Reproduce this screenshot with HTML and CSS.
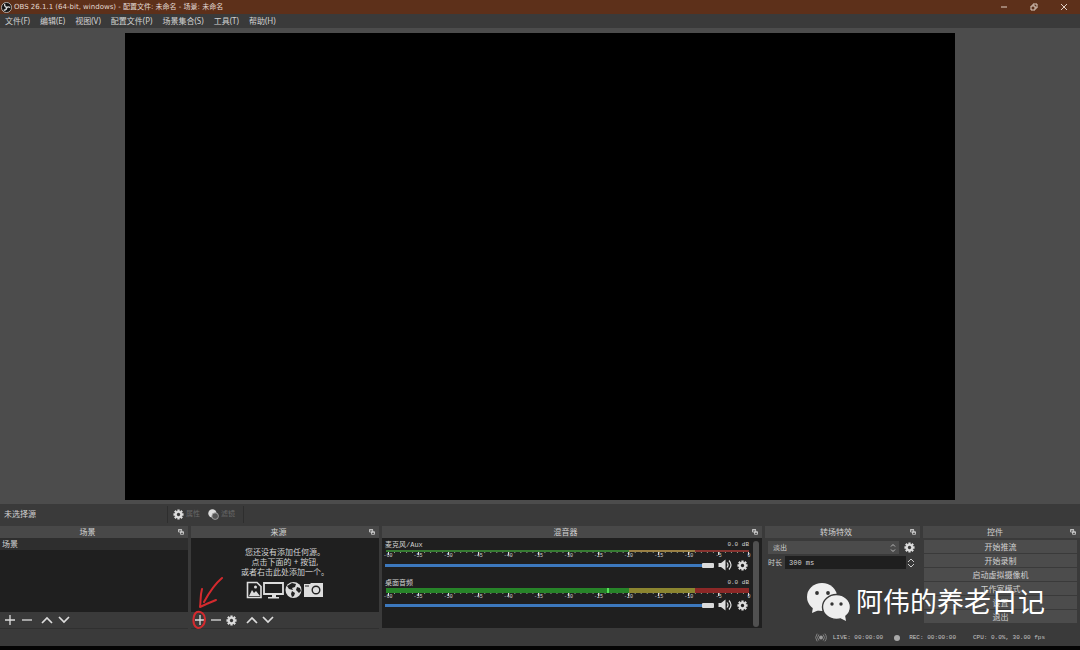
FILE: index.html
```html
<!DOCTYPE html>
<html lang="zh-CN">
<head>
<meta charset="utf-8">
<title>OBS 26.1.1</title>
<link rel="stylesheet" href="styles.css">
</head>
<body>
<svg class="defs" aria-hidden="true">
  <symbol id="gear" viewBox="0 0 24 24"><path fill="none" stroke="currentColor" stroke-width="4.500" d="M12 6a6 6 0 1 0 .01 0z"/><path stroke="currentColor" stroke-width="5" d="M12 1v4M12 19v4M1 12h4M19 12h4M4 4l3 3M17 17l3 3M4 20l3-3M17 7l3-3"/></symbol>
  <symbol id="plus" viewBox="0 0 12 12"><path d="M6 1v10M1 6h10" stroke="currentColor" stroke-width="1.300"/></symbol>
  <symbol id="minus" viewBox="0 0 12 12"><path d="M1 6h10" stroke="currentColor" stroke-width="1.300"/></symbol>
  <symbol id="up" viewBox="0 0 12 12"><path d="M1 9l5-5 5 5" fill="none" stroke="currentColor" stroke-width="1.700"/></symbol>
  <symbol id="down" viewBox="0 0 12 12"><path d="M1 3l5 5 5-5" fill="none" stroke="currentColor" stroke-width="1.700"/></symbol>
  <symbol id="float" viewBox="0 0 6 6"><path d="M.5 3V.8h3.200V3zM2.500 5.300V3h3v2.300z" fill="none" stroke="currentColor" stroke-width=".8"/><path d="M.2 .8h3.800M2.200 3h3.600" stroke="currentColor" stroke-width="1"/></symbol>
  <symbol id="speaker" viewBox="0 0 28 24"><path d="M0 8h5l9-7v22l-9-7H0z" fill="currentColor"/><path d="M17 7q4 5 0 10M21 3q8 9 0 18" fill="none" stroke="currentColor" stroke-width="2.400"/></symbol>
  <symbol id="ticks" viewBox="0 0 360 4" preserveAspectRatio="none"><path d="M0 .5h361" stroke="#8a9a88" stroke-width="1.500" stroke-dasharray="1 5"/><path d="M0 2h361" stroke="#ddd" stroke-width="4" stroke-dasharray="1 28.920"/></symbol>
</svg>

<header class="titlebar">
  <svg class="logo" viewBox="0 0 24 24"><circle cx="12" cy="12" r="11" fill="#151515" stroke="#ddd" stroke-width="1.500"/><g fill="none" stroke="#ddd" stroke-width="2.800"><path d="M8 4c-1 6 3 8 6 7"/><path d="M20 12c-5-3-9 0-8 4"/><path d="M6 18c6 0 7-4 5-7"/></g></svg>
  <span class="title">OBS 26.1.1 (64-bit, windows) - 配置文件: 未命名 - 场景: 未命名</span>
  <div class="winbtns">
    <button aria-label="最小化"><svg viewBox="0 0 8 8"><path d="M1 4h6"/></svg></button>
    <button aria-label="还原"><svg viewBox="0 0 8 8"><path d="M1 3h4v4H1zM3 3V1h4v4H5"/></svg></button>
    <button aria-label="关闭"><svg viewBox="0 0 8 8"><path d="M1 1l6 6M7 1L1 7"/></svg></button>
  </div>
</header>
<nav class="menubar">
  <button>文件(F)</button><button>编辑(E)</button><button>视图(V)</button><button>配置文件(P)</button><button>场景集合(S)</button><button>工具(T)</button><button>帮助(H)</button>
</nav>
<main class="preview"><div class="canvas"></div></main>

<div class="sourcebar">
  <span class="nosource">未选择源</span>
  <div class="sourceactions">
    <button disabled><svg class="i10"><use href="#gear"/></svg>属性</button>
    <button disabled><svg class="i10" viewBox="0 0 20 20"><circle cx="8" cy="8" r="7.500" fill="#ddd"/><circle cx="13" cy="13" r="6" fill="#555" stroke="#aaa" stroke-width="1.500"/></svg>滤镜</button>
  </div>
</div>

<div class="docks">
  <section class="dock">
    <h2>场景<svg class="float"><use href="#float"/></svg></h2>
    <ul class="list"><li>场景</li></ul>
    <div class="tools">
      <button aria-label="添加场景"><svg><use href="#plus"/></svg></button>
      <button aria-label="移除场景"><svg><use href="#minus"/></svg></button>
      <button class="apart" aria-label="上移"><svg><use href="#up"/></svg></button>
      <button aria-label="下移"><svg><use href="#down"/></svg></button>
    </div>
  </section>

  <section class="dock sources">
    <h2>来源<svg class="float"><use href="#float"/></svg></h2>
    <div class="list empty">
      <p>您还没有添加任何源。<br>点击下面的 + 按钮,<br>或者右击此处添加一个。</p>
      <svg class="kinds" viewBox="0 0 78 18">
        <path d="M1.500 1.500h9.500l4 4v11H1.500z" fill="none" stroke="#ddd" stroke-width="1.600"/><path d="M3 15l3-6 2 3 2-2 4 5z" fill="#ddd"/><circle cx="9.500" cy="6" r="1.500" fill="#ddd"/>
        <path d="M18 2h19v11H18z" fill="none" stroke="#ddd" stroke-width="1.800"/><path d="M26 13h4v3h3v1.500H22V16h4z" fill="#ddd"/>
        <circle cx="47.500" cy="9" r="8" fill="#ddd"/><path d="M46 2l4 1-1 3-3 1 1 2-4-1-2-3zM51 6l3 1 1 3-2 2-3-3zM46 10l3 2-1 3-2 1-1-3z" fill="#222"/>
        <path d="M58 3h6l1-1h12v14H58z" fill="#ddd"/><circle cx="70" cy="9" r="3.800" fill="#ddd" stroke="#222" stroke-width="1.400"/><path d="M59 5h4" stroke="#222"/>
      </svg>
    </div>
    <div class="tools">
      <button aria-label="添加来源"><svg><use href="#plus"/></svg></button>
      <button aria-label="移除来源"><svg><use href="#minus"/></svg></button>
      <button aria-label="来源属性"><svg class="i10"><use href="#gear"/></svg></button>
      <button class="near" aria-label="上移"><svg><use href="#up"/></svg></button>
      <button aria-label="下移"><svg><use href="#down"/></svg></button>
    </div>
    <svg class="mark" viewBox="0 0 34 56"><g fill="none" stroke="#d42a2e" stroke-width="2" stroke-linecap="round" stroke-linejoin="round"><path d="M33 3C27 8 21 16 15 27M13 14c-2 7-1 12-2 18 6-3 11-5 16-7M8 37c-4 2-5 12-1 15 4 3 9-2 9-8 0-5-4-8-8-7"/></g></svg>
  </section>

  <section class="dock">
    <h2>混音器<svg class="float"><use href="#float"/></svg></h2>
    <div class="mixer">
      <div class="channels">
        <div class="channel">
          <div class="names"><label for="mic">麦克风/Aux</label><output>0.0 dB</output></div>
          <div class="meter"></div>
          <svg class="ticks"><use href="#ticks"/></svg>
          <div class="scale"><span>-60</span><span>-55</span><span>-50</span><span>-45</span><span>-40</span><span>-35</span><span>-30</span><span>-25</span><span>-20</span><span>-15</span><span>-10</span><span>-5</span><span>0</span></div>
          <div class="volume"><input id="mic" type="range" value="100"><button aria-label="静音"><svg class="speaker"><use href="#speaker"/></svg></button><button aria-label="设置"><svg class="i10"><use href="#gear"/></svg></button></div>
        </div>
        <div class="channel">
          <div class="names"><label for="desk">桌面音频</label><output>0.0 dB</output></div>
          <div class="meter live"><i class="peak"></i></div>
          <svg class="ticks"><use href="#ticks"/></svg>
          <div class="scale"><span>-60</span><span>-55</span><span>-50</span><span>-45</span><span>-40</span><span>-35</span><span>-30</span><span>-25</span><span>-20</span><span>-15</span><span>-10</span><span>-5</span><span>0</span></div>
          <div class="volume"><input id="desk" type="range" value="100"><button aria-label="静音"><svg class="speaker"><use href="#speaker"/></svg></button><button aria-label="设置"><svg class="i10"><use href="#gear"/></svg></button></div>
        </div>
      </div>
      <div class="scrollbar"></div>
    </div>
  </section>

  <section class="dock">
    <h2>转场特效<svg class="float"><use href="#float"/></svg></h2>
    <div class="transition">
      <div class="row">
        <div class="combo"><select aria-label="转场"><option>淡出</option></select><svg viewBox="0 0 6 10"><path d="M1 3.500l2-2 2 2M1 6.500l2 2 2-2"/></svg></div>
        <button aria-label="转场设置"><svg class="i10"><use href="#gear"/></svg></button>
      </div>
      <div class="row">
        <label for="time">时长</label><input id="time" type="text" value="300 ms">
        <div class="spin"><button aria-label="增加"><svg viewBox="0 0 8 6"><path d="M1 5l3-3 3 3"/></svg></button><button aria-label="减少"><svg viewBox="0 0 8 6"><path d="M1 1l3 3 3-3"/></svg></button></div>
      </div>
    </div>
  </section>

  <section class="dock">
    <h2>控件<svg class="float"><use href="#float"/></svg></h2>
    <div class="controls"><button>开始推流</button><button>开始录制</button><button>启动虚拟摄像机</button><button>工作室模式</button><button>设置</button><button>退出</button></div>
  </section>

  <div class="watermark">
    <svg viewBox="0 0 44 38"><ellipse cx="15" cy="14" rx="15" ry="14" fill="#eee"/><path d="M6 24l-1 6 7-3z" fill="#eee"/><ellipse cx="29.500" cy="24" rx="14" ry="12.500" fill="#eee" stroke="#3a3a3a" stroke-width="1.400"/><path d="M33 35l6 3-1-6z" fill="#eee"/><g fill="#333"><circle cx="10" cy="10" r="1.900"/><circle cx="21" cy="10" r="1.900"/><circle cx="25" cy="21" r="1.700"/><circle cx="34" cy="21" r="1.700"/></g></svg>
    <span>阿伟的养老日记</span>
  </div>
</div>

<footer class="status">
  <svg viewBox="0 0 14 10"><circle cx="7" cy="5" r="2.200" fill="#999"/><path d="M4.500 1.500q-3 3.500 0 7M9.500 1.500q3 3.500 0 7M2.500.5q-3.500 4.500 0 9M11.500.5q3.500 4.500 0 9" fill="none" stroke="#999" stroke-width=".9"/></svg>
  <span class="live-time">LIVE: 00:00:00</span><i class="dot"></i><span>REC: 00:00:00</span><span class="cpu">CPU: 0.0%, 30.00 fps</span>
</footer>
<div class="taskbar"></div>
</body>
</html>
```

FILE: styles.css
```css
* { box-sizing: border-box; }
body {
  margin: 0;
  min-height: 100vh;
  display: flex;
  flex-direction: column;
  background: #3a3a3a;
  color: #d2d2d2;
  font: 7px/10px "Noto Sans", "Noto Sans CJK SC", sans-serif;
}
button, input, select { font: inherit; color: inherit; border: 0; padding: 0; margin: 0; background: none; }
button { display: flex; align-items: center; justify-content: center; }
svg { display: block; flex: none; }
.defs { position: absolute; width: 0; height: 0; }
.i10 { width: 11px; height: 11px; color: #ddd; }

.titlebar { display: flex; align-items: center; height: 14px; padding-left: 1px; background: #5d301a; font-family: "DejaVu Sans", "Noto Sans CJK SC", sans-serif; font-size: 7px; }
.logo { width: 11px; height: 11px; }
.title { margin-left: 2px; color: #e2d8d2; white-space: nowrap; }
.winbtns { display: flex; margin-left: auto; gap: 14px; padding-right: 8px; }
.winbtns button { width: 16px; }
.winbtns svg { width: 8px; height: 8px; fill: none; stroke: #e0cfc4; stroke-width: 1; }
.menubar { display: flex; height: 14px; gap: 10px; padding-left: 5px; font-size: 8px; }

.preview { flex: 1; display: flex; justify-content: center; padding: 5px 0 4px; background: #4c4c4c; }
.canvas { width: 76.85%; background: #000; }

.sourcebar { display: flex; height: 22px; align-items: center; padding: 0 0 2px 4px; }
.nosource { width: 163px; font-size: 8px; }
.sourceactions { display: flex; align-items: center; gap: 8px; height: 17px; padding: 0 8px 0 5px; border-left: 1px solid #2e2e2e; border-right: 1px solid #2e2e2e; }
.sourceactions button { gap: 2px; color: #686868; }

.docks { position: relative; display: grid; grid-template-columns: 188fr 188fr 380fr 155fr 157fr; gap: 3px; height: 103px; }
.dock { display: flex; flex-direction: column; min-width: 0; position: relative; }
.dock h2 { position: relative; margin: 0; height: 12px; padding-right: 13px; font-size: 8px; line-height: 11px; font-weight: 400; text-align: center; background: #484848; }
.float { position: absolute; right: 4px; top: 3px; width: 6px; height: 6px; }
.list { flex: 1; margin: 0; padding: 0; list-style: none; background: #1f1f1f; }
.list li { height: 12px; line-height: 12px; padding-left: 2px; background: #2e2e2e; font-size: 8px; }
.tools { display: flex; align-items: center; gap: 5px; height: 17px; padding-left: 4px; color: #ddd; border-bottom: 1px solid #303030; }
.tools svg { width: 12px; height: 12px; }
.tools .i10 { width: 11px; height: 11px; }
.tools .apart { margin-left: 3px; }
.tools .near { margin-left: 5px; }
.sources .tools { gap: 4px; padding-left: 3px; }
.empty { display: flex; flex-direction: column; align-items: center; padding-top: 9px; font-size: 8px; }
.empty p { margin: 0; text-align: center; }
.kinds { width: 78px; height: 18px; margin-top: 4px; }
.mark { position: absolute; left: -2px; top: 49px; width: 34px; height: 56px; }

.mixer { flex: 1; display: flex; gap: 4px; padding: 3px 3px 1px; background: #1f1f1f; margin-bottom: 1px; }
.channels { flex: 1; min-width: 0; }
.channel { height: 38px; font-family: "Liberation Mono", "Noto Sans CJK SC", monospace; }
.names { display: flex; justify-content: space-between; height: 8px; line-height: 8px; }
.names output { font-size: 6px; }
.meter { position: relative; height: 2px; margin: 1px 0 0 1px; background: linear-gradient(90deg, #367b32 0 67%, #9a8044 67% 85%, #863430 85%); }
.meter.live { height: 5px; background: linear-gradient(90deg, #278429 0 67%, #8b8530 67% 85%, #8c2827 85%); }
.peak { position: absolute; left: 61%; top: 0; width: 2px; height: 5px; background: #55e35a; }
.ticks { width: calc(100% - 3px); height: 3px; margin-left: 3px; }
.scale { display: flex; justify-content: space-between; height: 4px; margin: -1px -5px 0 -2px; font-size: 5px; line-height: 4px; }
.scale span { width: 10px; text-align: center; }
.volume { display: flex; align-items: center; height: 14px; gap: 6px; padding-right: 1px; }
.meter.live ~ .volume { margin-top: -1px; }
.volume input { appearance: none; flex: 1; min-width: 0; height: 5px; }
.volume input::-webkit-slider-runnable-track { height: 3px; background: #3c78bd; }
.volume input::-webkit-slider-thumb { appearance: none; width: 12px; height: 5px; margin-top: -1px; background: #dadada; border-radius: 1px; }
.volume button { margin-left: -2px; }
.speaker { width: 15px; height: 12px; color: #ddd; }
.scrollbar { width: 6px; border-radius: 3px; background: #505050; }

.transition { padding: 3px 5px 0 3px; display: flex; flex-direction: column; gap: 2px; }
.row { display: flex; align-items: center; height: 13px; gap: 5px; font-family: "Liberation Mono", "Noto Sans CJK SC", monospace; }
.combo { flex: 1; display: flex; align-items: center; height: 13px; padding-right: 3px; background: #4b4b4b; }
.combo select { appearance: none; flex: 1; padding-left: 5px; }
.combo svg { width: 6px; height: 10px; fill: none; stroke: #bbb; stroke-width: 1; }
.row input { flex: 1; min-width: 0; height: 13px; padding-left: 4px; background: #1f1f1f; }
.row label { margin-right: -2px; }
.spin { margin-left: -4px; }
.spin svg { width: 8px; height: 6px; fill: none; stroke: #ccc; stroke-width: 1; }
.controls { display: flex; flex-direction: column; gap: 1px; padding: 2px 3px 0 1px; }
.controls button { height: 13px; background: #4c4c4c; font-size: 8px; }

.watermark { position: absolute; right: 35px; top: 54px; display: flex; align-items: center; gap: 5px; color: #fff; font-size: 27px; line-height: 44px; white-space: nowrap; }
.watermark svg { width: 44px; height: 38px; }

.status { display: flex; align-items: center; justify-content: flex-end; height: 17px; padding-right: 35px; gap: 9px; font-family: "Liberation Mono", monospace; font-size: 6px; color: #c4c4c4; }
.status svg { width: 12px; height: 9px; margin-right: -3px; }
.live-time { margin-right: 2px; }
.dot { width: 6px; height: 6px; border-radius: 50%; background: #aaa; }
.cpu { margin-left: 8px; }
.taskbar { height: 4px; background: #050505; }
```
